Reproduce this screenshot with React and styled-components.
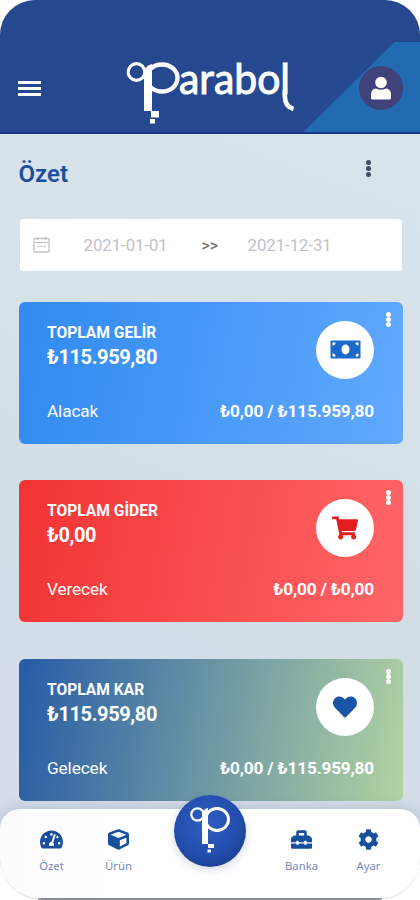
import React from "react";
import styled, { createGlobalStyle, ThemeProvider } from "styled-components";
import {
  FaShoppingCart,
  FaHeart,
  FaTachometerAlt,
  FaCube,
  FaToolbox,
  FaCog
} from "react-icons/fa";

const theme = {
  colors: {
    navy: "#26488f",
    blue: "#19509e",
    light: "#226ab1"
  },
  font: `Roboto, "Liberation Sans", sans-serif`
};

const GlobalStyle = createGlobalStyle`
  * {
    box-sizing: border-box;
  }
  body {
    margin: 0;
    background: #fff;
    font-family: ${theme.font};
  }
`;

const Screen = styled.div`
  position: relative;
  width: 420px;
  height: 900px;
  overflow: hidden;
  border-radius: 35px 35px 42px 42px;
  background: linear-gradient(200deg, #d9e4ec 0%, #d8e2eb 35%, #d3dde6 60%, #d5ddea 100%);
`;

const Header = styled.header`
  display: flex;
  align-items: center;
  justify-content: space-between;
  height: 134px;
  padding: 44px 17px 0 18px;
  border-bottom: 2px solid #173982;
  background: linear-gradient(
        to bottom right,
        transparent 50%,
        ${({ theme }) => theme.colors.light} 50.5%
      )
      right 26px bottom / 91px 90px no-repeat,
    linear-gradient(${({ theme }) => theme.colors.light}, ${({ theme }) => theme.colors.light})
      right bottom / 26px 90px no-repeat,
    ${({ theme }) => theme.colors.navy};
`;

const MenuButton = styled.div`
  display: flex;
  flex-direction: column;
  gap: 3px;
  width: 23px;
  span {
    height: 3px;
    background: #fff;
  }
`;

const LogoSvg = styled.svg`
  display: block;
  overflow: visible;
  margin: 8px 0 0 21px;
`;

const Avatar = styled.div`
  display: flex;
  align-items: center;
  justify-content: center;
  width: 44px;
  height: 44px;
  border-radius: 50%;
  background: #40427a;
`;

const Content = styled.main`
  display: flex;
  flex-direction: column;
  padding: 0 17.5px 0 18.5px;
`;

const TitleRow = styled.div`
  display: flex;
  align-items: flex-start;
  justify-content: space-between;
  height: 85px;
  padding: 26px 32px 0 0;
`;

const Title = styled.h1`
  margin: 0;
  color: ${({ theme }) => theme.colors.blue};
  font-size: 24px;
  line-height: 28px;
  font-weight: 600;
`;

const DotsWrapper = styled.div`
  display: flex;
  flex-direction: column;
  gap: ${({ $gap }) => $gap}px;
  span {
    width: 5px;
    height: 5px;
    border-radius: 50%;
    background: ${({ $color }) => $color};
  }
`;

const DateRange = styled.div`
  display: flex;
  align-items: center;
  height: 52px;
  margin: 0 1px 30.5px 1px;
  padding-left: 13px;
  border-radius: 3px;
  background: #fff;
  color: #bfc1c9;
  font-size: 16.7px;
`;

const DateValue = styled.span`
  width: 84px;
  white-space: nowrap;
`;

const Arrows = styled.span`
  width: 18px;
  margin: 0 28px 0 34px;
  color: #777;
  font-size: 16px;
  font-weight: 500;
`;

const CalendarSvg = styled.svg`
  margin-right: 34px;
`;

const Cards = styled.div`
  display: flex;
  flex-direction: column;
  gap: 36.5px;
`;

const CardWrapper = styled.section`
  position: relative;
  display: flex;
  flex-direction: column;
  justify-content: space-between;
  height: 142px;
  padding: 19px 28.5px 22px;
  border-radius: 6px;
  background: ${({ $bg }) => $bg};
  color: #fff;
`;

const CardTop = styled.div`
  display: flex;
  justify-content: space-between;
`;

const CardTitle = styled.div`
  padding-top: 2px;
  font-size: 15.6px;
  line-height: 20px;
  font-weight: 700;
`;

const Amount = styled.div`
  margin-top: 2px;
  font-size: 20px;
  line-height: 25px;
  font-weight: 700;
  letter-spacing: -0.4px;
`;

const IconCircle = styled.div`
  display: flex;
  align-items: center;
  justify-content: center;
  width: 58px;
  height: 58px;
  border-radius: 50%;
  background: #fff;
  color: ${({ $color }) => $color};
`;

const CardBottom = styled.div`
  display: flex;
  justify-content: space-between;
  font-size: 17.2px;
  line-height: 22px;
  letter-spacing: -0.1px;
  strong {
    font-weight: 700;
    letter-spacing: -0.17px;
  }
`;

const CardMenu = styled.div`
  position: absolute;
  top: 10px;
  right: 11.5px;
`;

const Nav = styled.nav`
  position: absolute;
  left: 0;
  right: 0;
  bottom: 2px;
  display: grid;
  grid-template-columns: 67px 67px 1fr 67px 67px;
  justify-items: center;
  height: 89px;
  padding: 0 18px;
  border-radius: 20px 20px 40px 40px;
  background: linear-gradient(90deg, #fbfbfc, #fff 25%);
  box-shadow: 0 0 14px rgba(110, 120, 140, 0.35);
`;

const Underline = styled.div`
  position: absolute;
  left: 0;
  right: 0;
  bottom: 0;
  height: 44px;
  border-radius: 0 0 42px 42px;
  background: linear-gradient(#fff 42px, #8e929b 42px) 38px 0 / 344px 44px no-repeat, #fff;
`;

const NavItem = styled.div`
  display: flex;
  flex-direction: column;
  align-items: center;
  padding-top: 18px;
  color: ${({ theme }) => theme.colors.blue};
`;

const NavIcon = styled.div`
  display: flex;
  align-items: center;
  height: 24px;
`;

const NavLabel = styled.div`
  margin-top: 7px;
  color: #7489bd;
  font-family: "Noto Sans", Roboto, sans-serif;
  font-size: 11.3px;
  line-height: 16px;
`;

const NavCenter = styled.div`
  display: flex;
  align-items: center;
  justify-content: center;
  width: 72px;
  height: 72px;
  margin-top: -14px;
  border-radius: 50%;
  background: radial-gradient(circle at 45% 40%, #2d5fc0 0%, #2450b0 50%, #153580 100%);
  box-shadow: 0 3px 8px rgba(40, 60, 110, 0.2);
`;

const Logo = () => (
  <LogoSvg width="174" height="68" viewBox="0 0 174 68" fill="none">
    <circle cx="12.5" cy="14" r="8.3" stroke="#fff" strokeWidth="3.2" />
    <ellipse cx="38" cy="20" rx="15.5" ry="13.5" stroke="#fff" strokeWidth="4.4" />
    <path d="M20 14 Q21 8 28 6 V53 H20 Z" fill="#fff" />
    <rect x="27" y="53" width="8" height="6.5" fill="#fff" />
    <rect x="26" y="61" width="5" height="4.5" fill="#fff" />
    <text
      x="55"
      y="36"
      fill="#fff"
      stroke="#fff"
      strokeWidth="1"
      fontFamily="Lato, sans-serif"
      fontSize="43"
      textLength="111"
      lengthAdjust="spacingAndGlyphs"
    >
      arabol
    </text>
    {/* tail under the last letter */}
    <path d="M160.8 32 V38 Q161 49 169.500 51" stroke="#fff" strokeWidth="4.6" />
  </LogoSvg>
);

const LogoMark = () => (
  <svg width="44" height="48" viewBox="0 0 44 48" fill="none" stroke="#fff">
    <circle cx="9.5" cy="7.5" r="6.2" strokeWidth="2.2" />
    <ellipse cx="29" cy="12.5" rx="11.5" ry="11" strokeWidth="3" />
    <path d="M14 7 Q15 2 20 1 V37 H14 Z" fill="#fff" stroke="none" />
    <rect x="20" y="37" width="6" height="4" fill="#fff" stroke="none" />
    <rect x="19.5" y="42.5" width="3.5" height="3" fill="#fff" stroke="none" />
  </svg>
);

const UserIcon = () => (
  <svg width="20" height="24" viewBox="0 0 20 24" fill="#fff">
    <circle cx="10" cy="6.5" r="5.8" />
    <path d="M0 22 V18.5 Q0 13 5 12.5 Q10 15 15 12.5 Q20 13 20 18.5 V22 Q20 23.5 18.5 23.5 H1.5 Q0 23.5 0 22 Z" />
  </svg>
);

const CalendarIcon = () => (
  <CalendarSvg width="17" height="16" viewBox="0 0 17 16" fill="none" stroke="#c3c3c8">
    <rect x="1" y="1.5" width="15" height="13.5" rx="1" strokeWidth="1.3" />
    <path d="M1 5.5 H16 M4.5 0 V3 M12.5 0 V3" strokeWidth="1.2" />
    <path d="M4.5 9.5 H12.5" strokeWidth="1.5" strokeDasharray="2 1" />
  </CalendarSvg>
);

const MoneyIcon = () => (
  <svg width="31" height="19" viewBox="0 0 31 19">
    <rect x=".5" y=".5" width="30" height="18" rx="1" fill="#1b69ca" />
    <ellipse cx="15.5" cy="9.5" rx="4" ry="5" fill="#fff" />
    <path
      d="M2.5 2.5h3a3 3 0 0 1-3 3zM28.5 2.5v3a3 3 0 0 1-3-3zM2.5 16.5v-3a3 3 0 0 1 3 3zM28.5 16.5h-3a3 3 0 0 1 3-3z"
      fill="#fff"
    />
  </svg>
);

const Dots = ({ color, gap }) => (
  <DotsWrapper $color={color} $gap={gap}>
    <span />
    <span />
    <span />
  </DotsWrapper>
);

const cards = [
  {
    id: 1,
    title: "TOPLAM GELİR",
    amount: "₺115.959,80",
    label: "Alacak",
    detail: "₺0,00 / ₺115.959,80",
    bg: "linear-gradient(100deg, #318af0, #60a9ff)",
    color: "#1b69ca",
    icon: <MoneyIcon />
  },
  {
    id: 2,
    title: "TOPLAM GİDER",
    amount: "₺0,00",
    label: "Verecek",
    detail: "₺0,00 / ₺0,00",
    bg: "linear-gradient(100deg, #f23333, #ff6668)",
    color: "#e51d20",
    icon: <FaShoppingCart size={26} />
  },
  {
    id: 3,
    title: "TOPLAM KAR",
    amount: "₺115.959,80",
    label: "Gelecek",
    detail: "₺0,00 / ₺115.959,80",
    bg: "linear-gradient(100deg, #265ba6, #b2d3a2)",
    color: "#1b55a5",
    icon: <FaHeart size={24} />
  }
];

const Card = ({ title, amount, label, detail, bg, color, icon }) => (
  <CardWrapper $bg={bg}>
    <CardTop>
      <div>
        <CardTitle>{title}</CardTitle>
        <Amount>{amount}</Amount>
      </div>
      <IconCircle $color={color}>{icon}</IconCircle>
    </CardTop>
    <CardBottom>
      <span>{label}</span>
      <strong>{detail}</strong>
    </CardBottom>
    <CardMenu>
      <Dots color="#fff" gap={0} />
    </CardMenu>
  </CardWrapper>
);

const NavLink = ({ icon, label }) => (
  <NavItem>
    <NavIcon>{icon}</NavIcon>
    <NavLabel>{label}</NavLabel>
  </NavItem>
);

const App = () => {
  return (
    <ThemeProvider theme={theme}>
      <GlobalStyle />
      <Screen>
        <Header>
          <MenuButton>
            <span />
            <span />
            <span />
          </MenuButton>
          <Logo />
          <Avatar>
            <UserIcon />
          </Avatar>
        </Header>
        <Content>
          <TitleRow>
            <Title>Özet</Title>
            <Dots color="#434b66" gap={1} />
          </TitleRow>
          <DateRange>
            <CalendarIcon />
            <DateValue>2021-01-01</DateValue>
            <Arrows>&gt;&gt;</Arrows>
            <DateValue>2021-12-31</DateValue>
          </DateRange>
          <Cards>
            {cards.map(card => (
              <Card key={card.id} {...card} />
            ))}
          </Cards>
        </Content>
        <Underline />
        <Nav>
          <NavLink icon={<FaTachometerAlt size={23} />} label="Özet" />
          <NavLink icon={<FaCube size={21} />} label="Ürün" />
          <NavCenter>
            <LogoMark />
          </NavCenter>
          <NavLink icon={<FaToolbox size={21} />} label="Banka" />
          <NavLink icon={<FaCog size={21} />} label="Ayar" />
        </Nav>
      </Screen>
    </ThemeProvider>
  );
};

export default App;
